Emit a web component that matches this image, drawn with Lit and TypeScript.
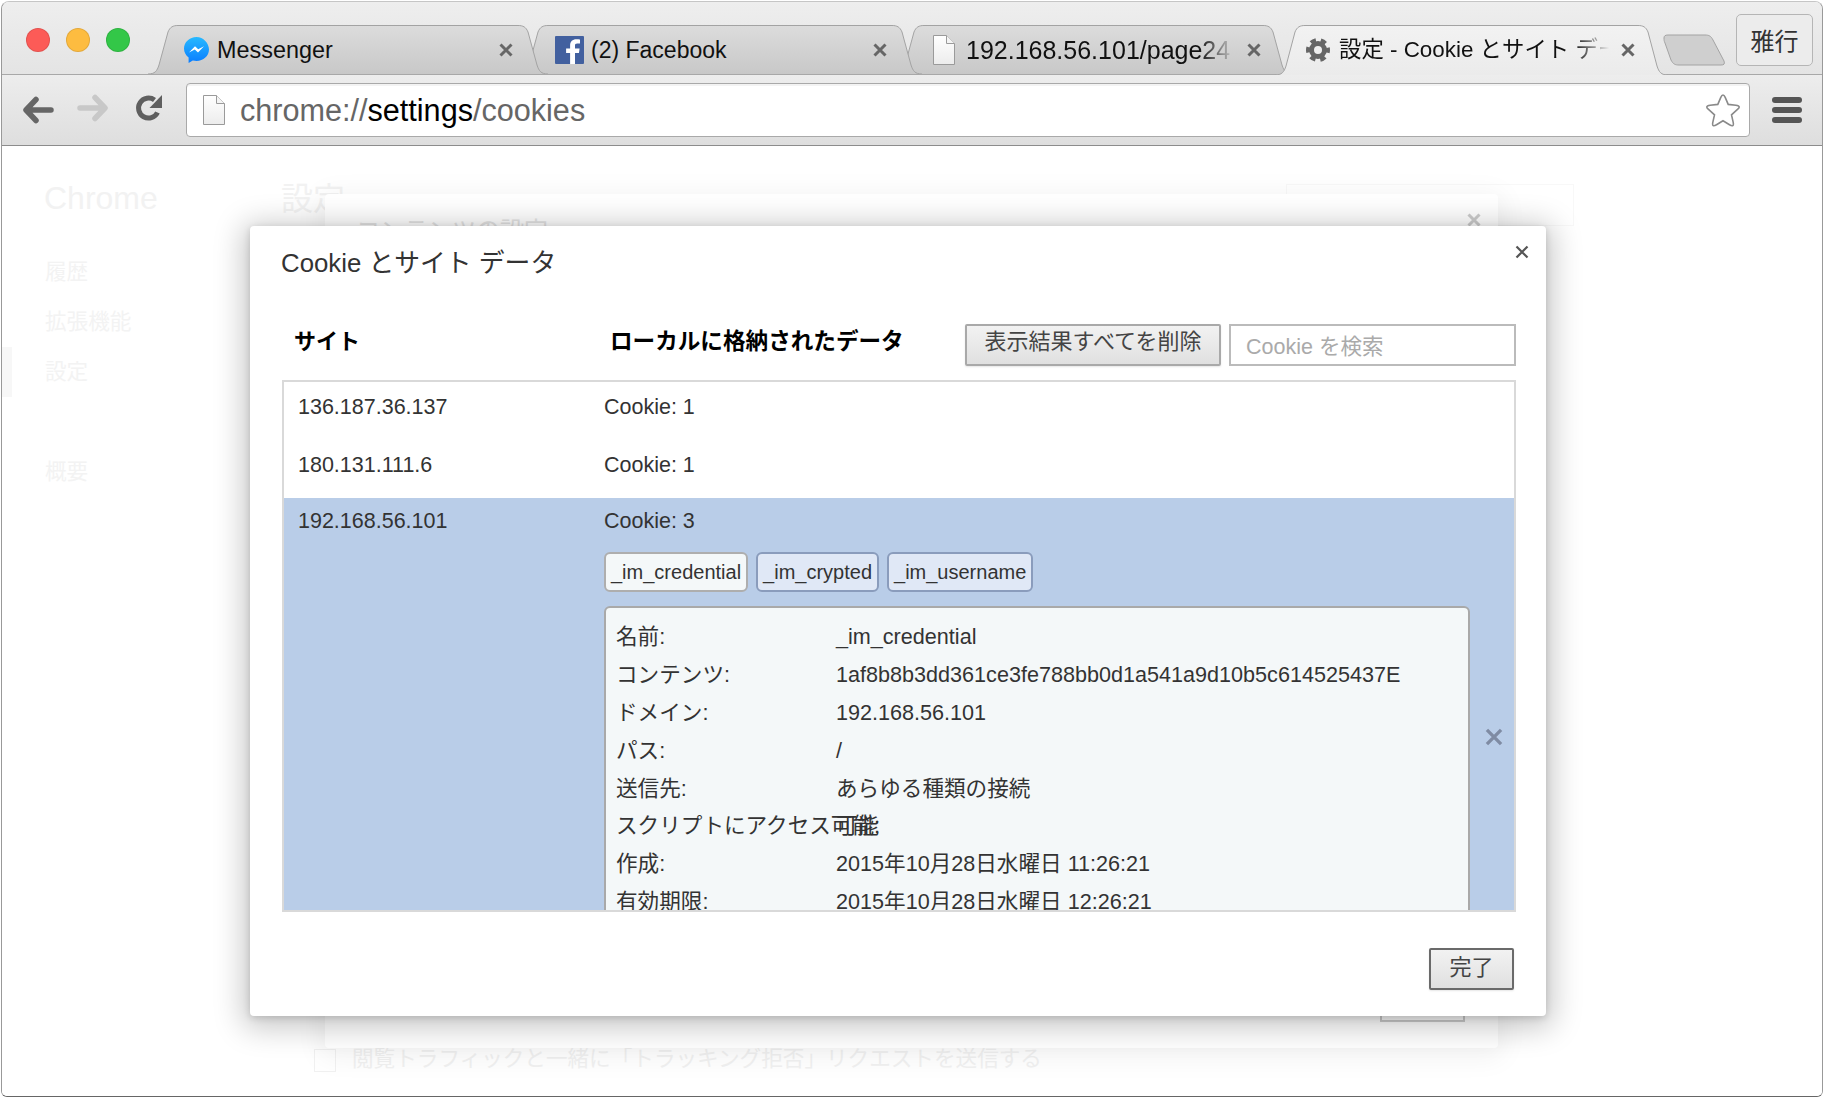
import { LitElement, html, css, svg } from 'lit';
import { customElement } from 'lit/decorators.js';
import { styleMap } from 'lit/directives/style-map.js';

const messengerIcon = html`<svg width="25" height="30" viewBox="0 0 25 30">
  <defs>
    <linearGradient id="msgr" x1="0" y1="0" x2="0" y2="1">
      <stop offset="0" stop-color="#27b9ff"></stop>
      <stop offset="1" stop-color="#0a7dff"></stop>
    </linearGradient>
  </defs>
  <path fill="url(#msgr)" d="M12.5 2C5.6 2 0 7.2 0 13.6c0 3.6 1.8 6.900 4.600 9V28l4.200-2.400c1.200.3 2.400.5 3.700.5 6.900 0 12.500-5.200 12.500-11.500S19.400 2 12.500 2z"></path>
  <path fill="#fff" d="M5 17.500l6-6.300 3.200 3.100 5.800-3.100-6 6.400-3.200-3.200z"></path>
</svg>`;

const facebookIcon = html`<svg width="29" height="28" viewBox="0 0 29 28">
  <rect width="29" height="28" rx="1" fill="#42609f"></rect>
  <path fill="#fff" d="M20 28V17h4l.6-4.600H20V9.700c0-1.300.4-2.200 2.300-2.200H25V3.400c-.5-.1-2-.2-3.700-.2-3.700 0-6.200 2.200-6.200 6.300v2.900h-4V17h4v11z"></path>
</svg>`;

const fileIcon = html`<svg width="22" height="30" viewBox="0 0 22 30">
  <defs>
    <linearGradient id="page" x1="0" y1="0" x2="0" y2="1">
      <stop offset="0" stop-color="#ffffff"></stop>
      <stop offset="1" stop-color="#ececec"></stop>
    </linearGradient>
  </defs>
  <path fill="url(#page)" stroke="#9a9a9a" d="M.5.500h13l8 8v21H.500z"></path>
  <path fill="#f4f4f4" stroke="#9a9a9a" d="M13.500.500v8h8"></path>
</svg>`;

const gearIcon = html`<svg width="24" height="24" viewBox="0 0 24 24">
  <circle cx="12" cy="12" r="6.500" fill="none" stroke="#666" stroke-width="5"></circle>
  <circle cx="12" cy="12" r="10" fill="none" stroke="#666" stroke-width="4" stroke-dasharray="5.500 4.970" stroke-dashoffset="2.700"></circle>
</svg>`;

const closeIcon = (size: number, color: string, weight: number) => html`<svg width=${size} height=${size} viewBox="0 0 14 14">
  <path d="M1.500 1.500l11 11M12.500 1.500l-11 11" fill="none" stroke=${color} stroke-width=${weight}></path>
</svg>`;

const arrowIcon = (flip: boolean, color: string) => html`<svg class=${flip ? 'flip' : ''} width="32" height="28" viewBox="0 0 32 28">
  <path d="M29 14H5M14 3.500L4 14l10 10.500" fill="none" stroke=${color} stroke-width="5.500" stroke-linecap="round" stroke-linejoin="round"></path>
</svg>`;

const reloadIcon = html`<svg width="28" height="28" viewBox="0 0 28 28">
  <path d="M22.500 18.500A10 10 0 1 1 19.500 6" fill="none" stroke="#5f5f5f" stroke-width="5"></path>
  <path d="M27 1v13H14.500z" fill="#5f5f5f"></path>
</svg>`;

const starIcon = html`<svg width="36" height="34" viewBox="0 0 36 34">
  <path d="M18 2c1 0 1.600 1 2.200 2.400l3 7 7.700.8c1.700.2 3.100.6 3.300 1.600.2 1-.8 1.800-2 2.900l-5.700 5.100 1.700 7.600c.3 1.500.4 2.700-.4 3.200-.9.500-2-.1-3.300-.9L18 27.800l-6.500 3.900c-1.300.8-2.400 1.400-3.300.9-.8-.5-.7-1.700-.4-3.200l1.700-7.600-5.700-5.100c-1.200-1.100-2.200-1.900-2-2.900.2-1 1.600-1.400 3.300-1.600l7.700-.8 3-7C16.400 3 17 2 18 2z" fill="#fff" stroke="#8a8a8a" stroke-width="1.600"></path>
</svg>`;

const menuIcon = html`<svg width="30" height="28" viewBox="0 0 30 28">
  <rect y="1" width="30" height="6" rx="3" fill="#555"></rect>
  <rect y="11" width="30" height="6" rx="3" fill="#555"></rect>
  <rect y="21" width="30" height="6" rx="3" fill="#555"></rect>
</svg>`;

// outline of a chrome tab, curved shoulders and slanted sides
const tabShape = (w: number, h: number, active: boolean) => {
  const d = `M0 ${h} C7 ${h} 9 ${h - 3} 11 ${h - 9} L20 7 C22 2 25 .5 30 .5 L${w - 30} .5 C${w - 25} .5 ${w - 22} 2 ${w - 20} 7 L${w - 11} ${h - 9} C${w - 9} ${h - 3} ${w - 7} ${h} ${w} ${h}`;
  return svg`<svg class="tab-bg" width=${w} height=${h} viewBox="0 0 ${w} ${h}">
    <defs>
      <linearGradient id=${active ? 'tabOn' : 'tabOff'} x1="0" y1="0" x2="0" y2="1">
        <stop offset="0" stop-color=${active ? '#f2f2f2' : '#dcdcdc'}></stop>
        <stop offset="1" stop-color=${active ? '#ebebeb' : '#c8c8c8'}></stop>
      </linearGradient>
    </defs>
    <path d="${d} Z" fill="url(#${active ? 'tabOn' : 'tabOff'})"></path>
    <path d=${d} fill="none" stroke="#a3a3a3" stroke-width="1"></path>
  </svg>`;
};

const tabs = [
  { title: 'Messenger', size: 23.4, icon: messengerIcon, width: 400, overlap: 0, inset: 36, slot: 33, right: 35, z: 4, fade: false, active: false },
  { title: '(2) Facebook', size: 23, icon: facebookIcon, width: 404, overlap: -30, inset: 37, slot: 36, right: 35, z: 3, fade: false, active: false },
  { title: '192.168.56.101/page24', size: 25, icon: fileIcon, width: 399, overlap: -28, inset: 39, slot: 33, right: 32, z: 2, fade: true, active: false },
  { title: '設定 - Cookie とサイト データ', size: 22.4, icon: gearIcon, width: 393, overlap: -18, inset: 31, slot: 33, right: 33, z: 5, fade: true, active: true },
];

const sites = [
  { site: '136.187.36.137', data: 'Cookie: 1' },
  { site: '180.131.111.6', data: 'Cookie: 1' },
];

const cookies = [
  { name: '_im_credential', on: true },
  { name: '_im_crypted', on: false },
  { name: '_im_username', on: false },
];

const details = [
  ['名前:', '_im_credential'],
  ['コンテンツ:', '1af8b8b3dd361ce3fe788bb0d1a541a9d10b5c614525437E'],
  ['ドメイン:', '192.168.56.101'],
  ['パス:', '/'],
  ['送信先:', 'あらゆる種類の接続'],
  ['スクリプトにアクセス可能:', '可能'],
  ['作成:', '2015年10月28日水曜日 11:26:21'],
  ['有効期限:', '2015年10月28日水曜日 12:26:21'],
];

@customElement('app-root')
export class AppRoot extends LitElement {
  static styles = css`
    :host {
      display: block;
      width: 1824px;
      height: 1098px;
      background: #fff;
      font-family: 'Liberation Sans', 'Noto Sans CJK JP', sans-serif;
      overflow: hidden;
    }

    * {
      box-sizing: border-box;
    }

    .window {
      margin: 1px;
      width: 1822px;
      height: 1096px;
      display: flex;
      flex-direction: column;
      border: 1px solid #999;
      border-top-color: #c6c6c6;
      border-bottom-color: #666;
      border-radius: 8px 8px 6px 6px;
      overflow: hidden;
    }

    /* tab strip */
    .strip {
      position: relative;
      z-index: 1;
      flex: none;
      height: 72px;
      display: flex;
      align-items: flex-start;
      padding-left: 24px;
      background: linear-gradient(#eeeeee, #e4e4e4);
    }

    .lights {
      display: flex;
      gap: 16px;
      margin-top: 26px;
      margin-right: 18px;
    }

    .light {
      width: 24px;
      height: 24px;
      border-radius: 50%;
      border: 1px solid rgba(0, 0, 0, 0.1);
    }

    .red { background: #fc5b57; }
    .yellow { background: #fdbc40; }
    .green { background: #33c748; }

    .tabs {
      display: flex;
      margin-top: 23px;
    }

    .tab {
      position: relative;
      flex: none;
      height: 49px;
      display: flex;
      align-items: center;
    }

    .tab.active {
      height: 50px;
    }

    .tab-bg {
      position: absolute;
      left: 0;
      top: 0;
    }

    .tab-icon {
      position: relative;
      flex: none;
      display: flex;
      align-items: center;
    }

    .tab-title {
      position: relative;
      flex: 1;
      min-width: 0;
      line-height: 30px;
      color: #111;
      white-space: nowrap;
      overflow: hidden;
    }

    .tab-title.fade {
      -webkit-mask-image: linear-gradient(to right, #000 calc(100% - 36px), transparent);
      mask-image: linear-gradient(to right, #000 calc(100% - 36px), transparent);
    }

    .tab-close {
      position: relative;
      flex: none;
      margin-left: 12px;
      display: flex;
    }

    .new-tab {
      flex: none;
      width: 63px;
      height: 32px;
      margin: 32px 0 0 -5px;
    }

    .profile {
      flex: none;
      width: 77px;
      height: 52px;
      margin: 12px 9px 0 auto;
      padding-bottom: 2px;
      display: flex;
      align-items: center;
      justify-content: center;
      border: 1px solid #b5b5b5;
      border-radius: 5px;
      font-size: 24px;
      color: #333;
      background: #ececec;
    }

    /* toolbar */
    .toolbar {
      flex: none;
      height: 72px;
      display: flex;
      align-items: center;
      padding-left: 20px;
      border-top: 1px solid #a8a8a8;
      border-bottom: 1px solid #8c8c8c;
      background: linear-gradient(#ededed, #dedede);
    }

    .flip {
      transform: scaleX(-1);
    }

    .fwd {
      margin-left: 23px;
    }

    .reload {
      margin-left: 26px;
    }

    .location {
      width: 1564px;
      height: 54px;
      margin-left: 23px;
      display: flex;
      align-items: center;
      padding: 0 8px 0 16px;
      background: #fff;
      border: 1px solid #a9a9a9;
      border-radius: 4px;
      box-shadow: inset 0 2px 0 #f3f3f3;
    }

    .url {
      margin-left: 15px;
      font-size: 30.600px;
      line-height: 40px;
      color: #666;
      white-space: nowrap;
    }

    .url b {
      font-weight: 400;
      color: #000;
    }

    .star {
      display: flex;
      margin-left: auto;
    }

    .menu {
      display: flex;
      margin-left: 22px;
    }

    /* faded settings page behind the dialogs */
    .page {
      position: relative;
      flex: 1;
      display: flex;
      background: #fff;
      min-height: 0;
    }

    .side {
      flex: none;
      width: 281px;
      padding-top: 24px;
      color: #f3f3f3;
    }

    .side-title {
      padding-left: 42px;
      font-size: 32px;
      line-height: 56px;
      color: #f2f2f2;
      margin-bottom: 21px;
    }

    .side-item {
      height: 50px;
      padding-left: 43px;
      font-size: 21.600px;
      line-height: 50px;
    }

    .side-item.sel {
      border-left: 10px solid #f7f7f7;
      padding-left: 33px;
    }

    .side-gap {
      height: 50px;
    }

    .main {
      flex: none;
      width: 1291px;
      display: flex;
      flex-direction: column;
      padding: 38px 0 24px;
    }

    .main-head {
      display: flex;
      align-items: flex-start;
      justify-content: space-between;
      height: 42px;
      font-size: 32px;
      line-height: 30px;
      color: #f2f2f2;
    }

    .main-head span {
      margin-left: -2px;
    }

    .main-search {
      width: 288px;
      height: 42px;
      border: 1px solid #f8f8f8;
    }

    .dnt {
      margin-top: auto;
      margin-left: 31px;
      display: flex;
      align-items: center;
      gap: 16px;
      height: 24px;
      font-size: 21.600px;
      color: #f1f1f1;
      white-space: nowrap;
    }

    .dnt i {
      width: 22px;
      height: 23px;
      border: 1px solid #f1f1f1;
    }

    .dnt span {
      margin-top: -8px;
    }

    /* parent dialog, dimmed */
    .under {
      position: absolute;
      left: 323px;
      top: 48px;
      width: 1173px;
      height: 854px;
      display: flex;
      flex-direction: column;
      padding: 22px 17px 26px 31px;
      background: #fff;
      border-radius: 4px;
      box-shadow: 0 5px 27px 6px rgba(0, 0, 0, 0.05);
      color: #e4e4e4;
      font-size: 24px;
      line-height: 30px;
    }

    .under-head {
      display: flex;
      justify-content: space-between;
      align-items: flex-start;
    }

    .under-close {
      display: flex;
      margin-top: -3px;
    }

    .under-btn {
      margin-top: auto;
      margin-left: auto;
      margin-right: 16px;
      width: 85px;
      height: 42px;
      border: 2px solid #ccc;
    }

    /* cookie dialog */
    .dialog {
      position: absolute;
      left: 248px;
      top: 80px;
      width: 1296px;
      height: 790px;
      padding: 22px 30px 26px 32px;
      background: #fff;
      border-radius: 4px;
      box-shadow: 0 5px 30px 7px rgba(0, 0, 0, 0.22), 0 2px 7px rgba(0, 0, 0, 0.15);
      color: #333;
    }

    .dialog-close {
      position: absolute;
      top: 19px;
      right: 17px;
      display: flex;
    }

    .dialog-title {
      margin: 0 0 46px -1px;
      font-size: 25.800px;
      font-weight: 400;
      line-height: 30px;
    }

    .head-row {
      display: flex;
      height: 42px;
    }

    .col-site,
    .col-data {
      margin-top: 2px;
      font-size: 22px;
      font-weight: 700;
      line-height: 32px;
      color: #000;
    }

    .col-site {
      width: 328px;
      padding-left: 12px;
    }

    .col-data {
      width: 355px;
      font-size: 22.600px;
    }

    .btn {
      flex: none;
      display: flex;
      align-items: center;
      justify-content: center;
      height: 42px;
      font-size: 22px;
      line-height: 30px;
      padding-bottom: 6px;
      color: #444;
      border: 2px solid #a9a9a9;
      border-radius: 2px;
      background: linear-gradient(#f2f2f2, #e0e0e0);
      box-shadow: 0 1px 2px rgba(0, 0, 0, 0.1);
    }

    .btn-clear {
      width: 256px;
    }

    .search {
      flex: none;
      width: 287px;
      height: 42px;
      margin-left: 8px;
      padding: 0 0 2px 15px;
      display: flex;
      align-items: center;
      border: 2px solid #bbb;
      font-size: 21.500px;
      color: #aaa;
    }

    .list {
      height: 532px;
      margin-top: 14px;
      border: 2px solid #d9d9d9;
      overflow: hidden;
      font-size: 21.500px;
      line-height: 24px;
    }

    .row {
      display: flex;
      height: 58px;
      padding-top: 13px;
    }

    .row-site {
      flex: none;
      width: 320px;
      padding-left: 14px;
    }

    .row.open {
      height: auto;
      min-height: 520px;
      padding-top: 11px;
      background: #b9cde8;
    }

    .chips {
      display: flex;
      gap: 8px;
      margin-top: 19px;
    }

    .chip {
      height: 40px;
      padding: 0 5px;
      display: flex;
      align-items: center;
      font-size: 20px;
      border: 2px solid #8a9cbc;
      border-radius: 6px;
      background: #e0e8f6;
    }

    .chip.on {
      border-color: #aeaeae;
      background: #f4f8f9;
    }

    .detail-wrap {
      display: flex;
      margin-top: 14px;
    }

    .details {
      width: 866px;
      height: 400px;
      padding: 10px 0 0 10px;
      border: 2px solid #a9a9a9;
      border-radius: 6px;
      background: #f4f8f9;
    }

    .detail {
      display: flex;
      height: 37.900px;
      align-items: center;
      white-space: nowrap;
      font-size: 21.600px;
    }

    .detail span:first-child {
      flex: none;
      width: 220px;
    }

    .detail-del {
      display: flex;
      margin: 122px 0 0 15px;
    }

    .footer {
      display: flex;
      justify-content: flex-end;
      margin: 36px 2px 0 0;
    }

    .btn-done {
      width: 85px;
      padding-bottom: 3px;
      border-color: #6a6a6a;
    }
  `;

  render() {
    return html`
      <div class="window">
        <div class="strip">
          <div class="lights">
            <div class="light red"></div>
            <div class="light yellow"></div>
            <div class="light green"></div>
          </div>
          <div class="tabs">
            ${tabs.map(
              (t) => html`
                <div
                  class="tab ${t.active ? 'active' : ''}"
                  style=${styleMap({
                    width: `${t.width}px`,
                    marginLeft: `${t.overlap}px`,
                    zIndex: `${t.z}`,
                    paddingLeft: `${t.inset}px`,
                    paddingRight: `${t.right}px`,
                  })}
                >
                  ${tabShape(t.width, t.active ? 50 : 49, t.active)}
                  <div class="tab-icon" style=${styleMap({ width: `${t.slot}px` })}>${t.icon}</div>
                  <div class="tab-title ${t.fade ? 'fade' : ''}" style=${styleMap({ fontSize: `${t.size}px` })}>${t.title}</div>
                  <div class="tab-close">${closeIcon(14, '#666', 3)}</div>
                </div>
              `
            )}
          </div>
          <svg class="new-tab" viewBox="0 0 63 32">
            <path d="M1 4C1 2 2 1 5 1H42C46 1 48 2 50 6L61 27C62 30 61 31 58 31H16C12 31 10 30 8 26L2 9C1 7 1 6 1 4Z" fill="#cfcfcf" stroke="#a3a3a3"></path>
          </svg>
          <div class="profile">雅行</div>
        </div>

        <div class="toolbar">
          ${arrowIcon(false, '#666')}
          <div class="fwd">${arrowIcon(true, '#c8c8c8')}</div>
          <div class="reload">${reloadIcon}</div>
          <div class="location">
            ${fileIcon}
            <div class="url">chrome://<b>settings</b>/cookies</div>
            <div class="star">${starIcon}</div>
          </div>
          <div class="menu">${menuIcon}</div>
        </div>

        <div class="page">
          <div class="side">
            <div class="side-title">Chrome</div>
            <div class="side-item">履歴</div>
            <div class="side-item">拡張機能</div>
            <div class="side-item sel">設定</div>
            <div class="side-gap"></div>
            <div class="side-item">概要</div>
          </div>
          <div class="main">
            <div class="main-head">
              <span>設定</span>
              <div class="main-search"></div>
            </div>
            <div class="dnt"><i></i><span>閲覧トラフィックと一緒に「トラッキング拒否」リクエストを送信する</span></div>
          </div>

          <div class="under">
            <div class="under-head">
              <span>コンテンツの設定</span>
              <div class="under-close">${closeIcon(14, '#ccc', 3)}</div>
            </div>
            <div class="under-btn"></div>
          </div>

          <div class="dialog">
            <div class="dialog-close">${closeIcon(14, '#555', 2.2)}</div>
            <h1 class="dialog-title">Cookie とサイト データ</h1>
            <div class="head-row">
              <div class="col-site">サイト</div>
              <div class="col-data">ローカルに格納されたデータ</div>
              <div class="btn btn-clear">表示結果すべてを削除</div>
              <div class="search">Cookie を検索</div>
            </div>
            <div class="list">
              ${sites.map(
                (s) => html`
                  <div class="row">
                    <div class="row-site">${s.site}</div>
                    <div>${s.data}</div>
                  </div>
                `
              )}
              <div class="row open">
                <div class="row-site">192.168.56.101</div>
                <div>
                  <div>Cookie: 3</div>
                  <div class="chips">
                    ${cookies.map((c) => html`<div class="chip ${c.on ? 'on' : ''}">${c.name}</div>`)}
                  </div>
                  <div class="detail-wrap">
                    <div class="details">
                      ${details.map(
                        ([k, v]) => html`<div class="detail"><span>${k}</span><span>${v}</span></div>`
                      )}
                    </div>
                    <div class="detail-del">${closeIcon(18, '#7f8ba3', 2.6)}</div>
                  </div>
                </div>
              </div>
            </div>
            <div class="footer">
              <div class="btn btn-done">完了</div>
            </div>
          </div>
        </div>
      </div>
    `;
  }
}

declare global {
  interface HTMLElementTagNameMap {
    'app-root': AppRoot;
  }
}
